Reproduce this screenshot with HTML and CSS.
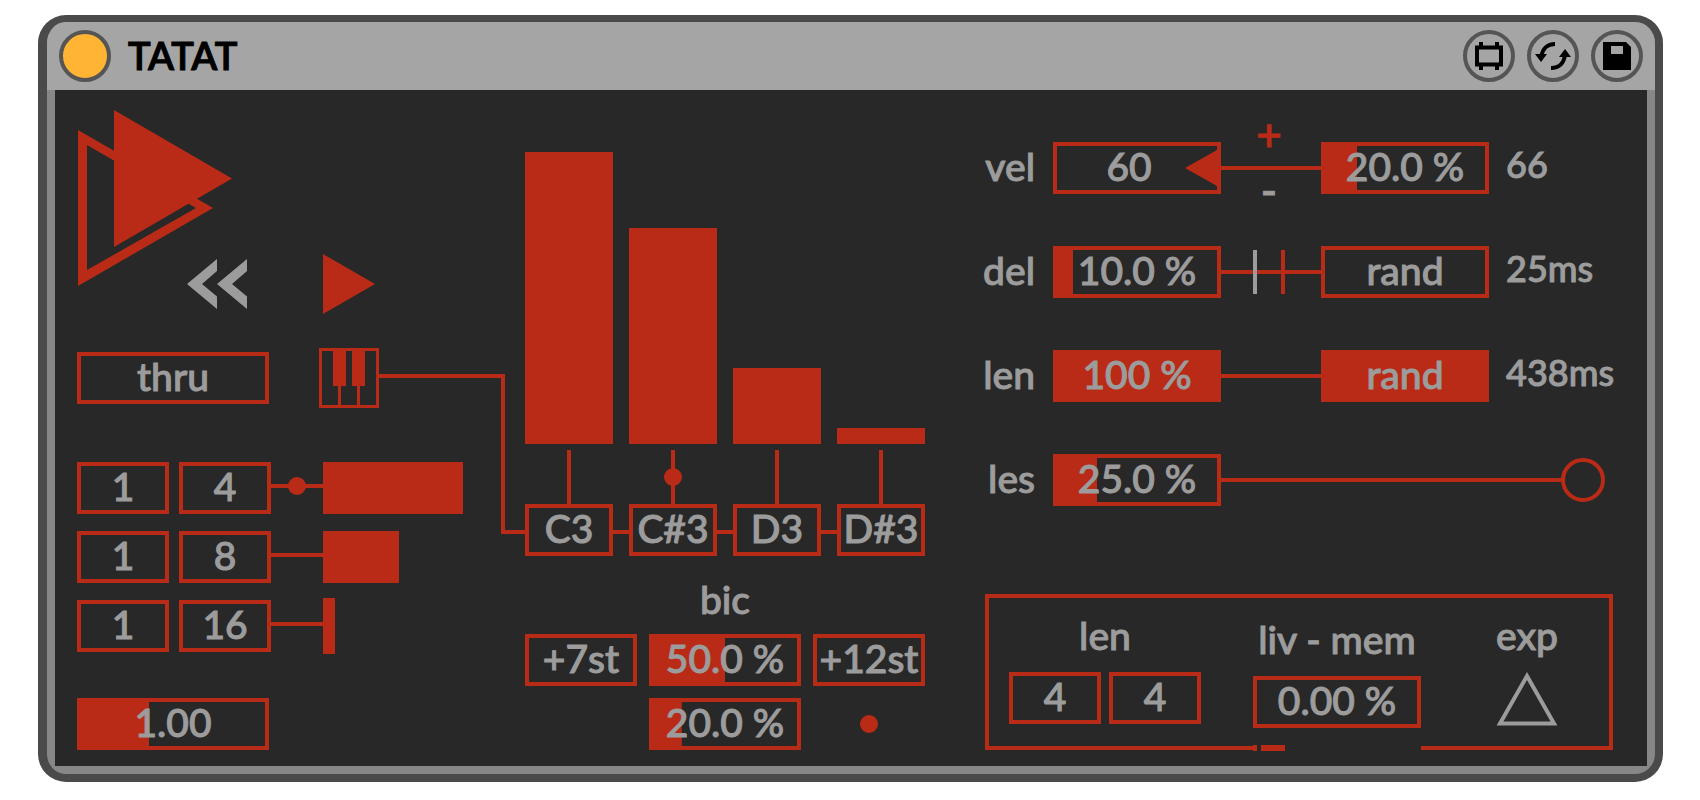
FILE: index.html
```html
<!DOCTYPE html>
<html lang="en">
<head>
    <meta charset="UTF-8">
    <meta name="viewport" content="width=device-width, initial-scale=1.0">
    <title>TATAT</title>
    <link rel="stylesheet" href="styles.css">
</head>
<body>
<div class="device">
    <header class="header">
        <button class="power" aria-label="Device on"></button>
        <h1 class="title">TATAT</h1>
        <div class="header-buttons">
            <button class="round-button" aria-label="Edit device">
                <svg width="30" height="30" viewBox="0 0 30 30">
                    <path d="M3 6.5h24v17H3z" fill="none" stroke="#000" stroke-width="4"/>
                    <path d="M7 1v5M23 1v5M7 24v5M23 24v5" stroke="#000" stroke-width="4"/>
                </svg>
            </button>
            <button class="round-button" aria-label="Hot-swap">
                <svg width="36" height="30" viewBox="0 0 36 30">
                    <path d="M20 3C12 3 7.500 8 6.500 15M16 27C24 27 29 22 30 14" fill="none" stroke="#000" stroke-width="4"/>
                    <path d="M0 13h12l-6 8zM24 16h12l-6-8z"/>
                </svg>
            </button>
            <button class="round-button" aria-label="Save preset">
                <svg width="28" height="28" viewBox="0 0 28 28">
                    <path fill-rule="evenodd" d="M0 0h23l5 5v23H0zM8 4v8h12V4z"/>
                </svg>
            </button>
        </div>
    </header>

    <main class="panel">
        <!-- transport and rates -->
        <section class="left">
            <svg class="logo" width="156" height="176" viewBox="0 0 156 176">
                <path fill-rule="evenodd" d="M1 20L136 98 1 176zM10 35v125L119 98z"/>
                <path d="M37 0l118 68.500L37 137z"/>
            </svg>
            <div class="transport">
                <button class="icon-button" aria-label="Rewind">
                    <svg width="60" height="60" viewBox="0 0 60 60" class="grey">
                        <path d="M30 5v12L15 30l15 12.500V55L0 30zM60 5v12L45 30l15 12.500V55L30 30z"/>
                    </svg>
                </button>
                <button class="icon-button" aria-label="Play">
                    <svg width="52" height="60" viewBox="0 0 52 60"><path d="M0 0l52 30L0 60z"/></svg>
                </button>
            </div>
            <div class="input-row">
                <button class="field wide">thru</button>
                <button class="icon-button keys" aria-label="Keyboard">
                    <svg width="60" height="60" viewBox="0 0 60 60">
                        <path d="M1.500 1.500h57v57h-57z" fill="none" stroke="#b92b16" stroke-width="3"/>
                        <path d="M14 0h13v38H14zM33 0h13v38H33zM19 38h3v20h-3zM38 38h3v20h-3z"/>
                    </svg>
                </button>
                <div class="elbow"></div>
                <div class="elbow-end"></div>
            </div>
            <div class="rates">
                <div class="rate">
                    <input class="field small" type="text" value="1" aria-label="Rate 1 numerator">
                    <input class="field small" type="text" value="4" aria-label="Rate 1 denominator">
                    <div class="line rate-line"><span class="dot"></span></div>
                    <div class="rate-bar" style="width: 140px"></div>
                </div>
                <div class="rate">
                    <input class="field small" type="text" value="1" aria-label="Rate 2 numerator">
                    <input class="field small" type="text" value="8" aria-label="Rate 2 denominator">
                    <div class="line rate-line"></div>
                    <div class="rate-bar" style="width: 76px"></div>
                </div>
                <div class="rate">
                    <input class="field small" type="text" value="1" aria-label="Rate 3 numerator">
                    <input class="field small" type="text" value="16" aria-label="Rate 3 denominator">
                    <div class="line rate-line"></div>
                    <div class="rate-bar low" style="width: 12px"></div>
                </div>
            </div>
            <input class="field wide" type="text" value="1.00" aria-label="Speed" style="--fill: 37%">
        </section>

        <!-- notes -->
        <section class="middle">
            <div class="bars">
                <div class="bar" style="height: 100%"></div>
                <div class="bar" style="height: 74%"></div>
                <div class="bar" style="height: 26%"></div>
                <div class="bar" style="height: 16px"></div>
            </div>
            <div class="stems">
                <div class="stem"></div>
                <div class="stem"><span class="dot"></span></div>
                <div class="stem"></div>
                <div class="stem"></div>
            </div>
            <div class="notes">
                <input class="field note" type="text" value="C3" aria-label="Note 1">
                <div class="line link"></div>
                <input class="field note" type="text" value="C#3" aria-label="Note 2">
                <div class="line link"></div>
                <input class="field note" type="text" value="D3" aria-label="Note 3">
                <div class="line link"></div>
                <input class="field note" type="text" value="D#3" aria-label="Note 4">
            </div>
            <label class="label bic-label" for="bic">bic</label>
            <div class="bic">
                <input class="field" type="text" value="+7st" aria-label="Transpose 1">
                <input class="field" type="text" value="50.0 %" id="bic" style="--fill: 50%">
                <input class="field" type="text" value="+12st" aria-label="Transpose 2">
                <input class="field second" type="text" value="20.0 %" aria-label="Bic chance" style="--fill: 20%">
                <span class="dot"></span>
            </div>
        </section>

        <!-- velocity, delay, length -->
        <section class="right">
            <div class="params">
                <div class="param">
                    <label class="label" for="vel">vel</label>
                    <div class="arrow-field">
                        <input class="field" type="text" value="60" id="vel">
                        <svg class="arrow" width="32" height="36" viewBox="0 0 32 36"><path d="M32 0v36L0 18z"/></svg>
                    </div>
                    <div class="polarity">
                        <button class="sign on">+</button>
                        <div class="line"></div>
                        <button class="sign">-</button>
                    </div>
                    <input class="field" type="text" value="20.0 %" aria-label="Velocity amount" style="--fill: 20%">
                    <output class="readout">66</output>
                </div>
                <div class="param">
                    <label class="label" for="del">del</label>
                    <input class="field" type="text" value="10.0 %" id="del" style="--fill: 10%">
                    <div class="line ticks"><span class="tick"></span><span class="tick on"></span></div>
                    <button class="field">rand</button>
                    <output class="readout">25ms</output>
                </div>
                <div class="param">
                    <label class="label" for="len">len</label>
                    <input class="field" type="text" value="100 %" id="len" style="--fill: 100%">
                    <div class="line"></div>
                    <button class="field" aria-pressed="true" style="--fill: 100%">rand</button>
                    <output class="readout">438ms</output>
                </div>
                <div class="param">
                    <label class="label" for="les">les</label>
                    <input class="field" type="text" value="25.0 %" id="les" style="--fill: 25%">
                    <div class="les-wire">
                        <div class="line"></div>
                        <button class="ring" aria-label="Les trigger"></button>
                    </div>
                </div>
            </div>

            <div class="memory">
                <div class="cell cell-len">
                    <label class="label" for="mem-len">len</label>
                    <div class="pair">
                        <input class="field small" type="text" value="4" id="mem-len">
                        <input class="field small" type="text" value="4" aria-label="Length beats">
                    </div>
                </div>
                <div class="cell cell-mem">
                    <label class="label" for="mem">liv - mem</label>
                    <input class="field" type="text" value="0.00 %" id="mem">
                    <div class="position"><span class="mark"></span><span class="step"></span></div>
                </div>
                <div class="cell cell-exp">
                    <label class="label" for="exp">exp</label>
                    <button class="icon-button" id="exp">
                        <svg width="62" height="54" viewBox="0 0 62 54">
                            <path d="M31 4L58 51.500H4z" fill="none" stroke="#9c9c9c" stroke-width="4"/>
                        </svg>
                    </button>
                </div>
            </div>
        </section>
    </main>
</div>
</body>
</html>
```

FILE: styles.css
```css
* {
    margin: 0;
    padding: 0;
    box-sizing: border-box;
}

:root {
    --red: #b92b16;
    --grey: #9c9c9c;
    --dark: #282828;
}

body {
    font-family: Lato, sans-serif;
    font-size: 39px;
    font-weight: 500;
    line-height: 40px;
    -webkit-text-stroke: 1px currentColor;
    background: #ffffff;
    color: var(--grey);
}

button, input {
    font: inherit;
    color: inherit;
    background: none;
    border: none;
    border-radius: 0;
}

button {
    cursor: pointer;
}

svg {
    display: block;
    fill: var(--red);
}

/* device frame */
.device {
    margin: 15px 37px 0 38px;
    border: solid #4a4a4a;
    border-width: 7px 8px 8px 9px;
    border-radius: 28px;
    background: #878787;
    overflow: hidden;
}

.header {
    display: flex;
    align-items: center;
    height: 68px;
    padding: 0 12px;
    background: #a5a5a5;
}

.power, .round-button {
    width: 52px;
    height: 52px;
    border: 4px solid #555555;
    border-radius: 50%;
}

.power {
    background: #ffb433;
}

.title {
    margin-left: 17px;
    padding-bottom: 2px;
    font-size: 38px;
    font-weight: 600;
    color: #000000;
}

.header-buttons {
    display: flex;
    gap: 12px;
    margin-left: auto;
}

.round-button {
    display: flex;
    align-items: center;
    justify-content: center;
}

.round-button svg {
    flex: none;
    fill: #000000;
}

.panel {
    display: grid;
    grid-template-columns: 470fr 400fr 722fr;
    margin: 0 8px 8px;
    padding-bottom: 16px;
    background: var(--dark);
}

/* shared controls */
.field {
    display: block;
    width: 100%;
    min-width: 0;
    height: 52px;
    padding-bottom: 4px;
    border: 4px solid var(--red);
    background: linear-gradient(var(--red), var(--red)) no-repeat;
    background-size: var(--fill, 0) 100%;
    text-align: center;
}

.wide {
    flex: none;
    width: 192px;
}

.small {
    flex: none;
    width: 92px;
}

.icon-button {
    flex: none;
}

.grey {
    fill: var(--grey);
}

.label {
    white-space: nowrap;
}

.line {
    height: 4px;
    background: var(--red);
}

.dot {
    flex: none;
    width: 18px;
    height: 18px;
    border-radius: 50%;
    background: var(--red);
}

/* left column */
.left {
    padding: 20px 0 0 22px;
}

.transport {
    display: flex;
    gap: 76px;
    margin-top: -32px;
    padding-left: 110px;
}

.input-row {
    display: flex;
    align-items: flex-start;
    height: 60px;
    margin-top: 34px;
}

.input-row .wide {
    align-self: center;
}

.keys {
    margin-left: 50px;
}

.elbow {
    flex: 1;
    height: 160px;
    margin-top: 26px;
    border: solid var(--red);
    border-width: 4px 4px 0 0;
}

.elbow-end {
    width: 20px;
    height: 160px;
    margin-top: 26px;
    border-bottom: 4px solid var(--red);
}

.rates {
    display: grid;
    gap: 17px;
    width: 400px;
    margin: 54px 0 46px;
}

.rate {
    display: flex;
    align-items: center;
    height: 52px;
}

.rate .small + .small {
    margin-left: 10px;
}

.rate-line {
    display: flex;
    align-items: center;
    justify-content: center;
    width: 52px;
    margin-bottom: 4px;
}

.rate-bar {
    height: 52px;
    background: var(--red);
}

.rate-bar.low {
    flex: none;
    height: 56px;
}

/* middle column */
.middle {
    padding-top: 62px;
}

.bars, .stems {
    display: grid;
    grid-template-columns: repeat(4, 1fr);
    gap: 16px;
}

.bars {
    align-items: end;
    height: 292px;
}

.bar {
    background: var(--red);
}

.stems {
    justify-items: center;
    height: 54px;
    margin-top: 6px;
}

.stem {
    display: flex;
    align-items: center;
    justify-content: center;
    width: 4px;
    background: var(--red);
}

.notes {
    display: flex;
    align-items: center;
}

.note {
    flex: 1;
}

.link {
    flex: none;
    width: 16px;
}

.notes .link {
    margin-top: 4px;
}

.bic-label {
    display: block;
    margin: 23px 0 15px;
    text-align: center;
}

.bic {
    display: grid;
    grid-template-columns: 112fr 152fr 112fr;
    gap: 12px;
    align-items: center;
    justify-items: center;
}

.second {
    grid-column: 2;
}

/* right column */
.right {
    padding: 52px 34px 0 60px;
}

.params {
    display: grid;
    gap: 52px;
}

.param {
    display: grid;
    grid-template-columns: 68px 168px 1fr 168px 124px;
    align-items: center;
    height: 52px;
}

.param .label {
    padding: 0 18px 4px 0;
    justify-self: end;
}

.arrow-field {
    position: relative;
}

.arrow-field .field {
    padding-right: 16px;
}

.arrow {
    position: absolute;
    top: 8px;
    right: 4px;
}

.polarity {
    display: flex;
    flex-direction: column;
    justify-content: center;
    height: 52px;
}

.polarity .line {
    flex: none;
}

.sign {
    flex: none;
    align-self: center;
    width: 40px;
    height: 52px;
    padding: 0 4px 12px 0;
    font-size: 44px;
    font-weight: 500;
}

.sign.on {
    color: var(--red);
}

.ticks {
    display: flex;
    align-items: center;
    gap: 24px;
    padding-left: 32px;
}

.tick {
    width: 4px;
    height: 44px;
    background: var(--grey);
}

.tick.on {
    background: var(--red);
}

.readout {
    padding: 0 0 8px 17px;
    font-size: 36px;
    white-space: nowrap;
}

.les-wire {
    grid-column: 3 / -1;
    display: flex;
    align-items: center;
    padding-right: 8px;
}

.les-wire .line {
    flex: 1;
}

.ring {
    width: 44px;
    height: 44px;
    border: 4px solid var(--red);
    border-radius: 50%;
}

/* memory box */
.memory {
    display: grid;
    grid-template-columns: 268px 168px 1fr;
    margin-top: 88px;
}

.cell {
    display: flex;
    flex-direction: column;
    align-items: center;
    gap: 17px;
    padding-top: 17px;
    border: 0 solid var(--red);
    border-top-width: 4px;
}

.cell-len {
    padding: 17px 52px 22px 20px;
    border-width: 4px 0 4px 4px;
}

.pair {
    display: flex;
    gap: 8px;
}

.cell-mem {
    padding-top: 21px;
}

.position {
    display: flex;
    gap: 4px;
    align-self: stretch;
    height: 6px;
    margin-bottom: -2px;
}

.mark, .step {
    width: 4px;
    background: var(--red);
}

.step {
    width: 24px;
}

.cell-exp {
    padding-left: 24px;
    border-width: 4px 4px 4px 0;
}
```
